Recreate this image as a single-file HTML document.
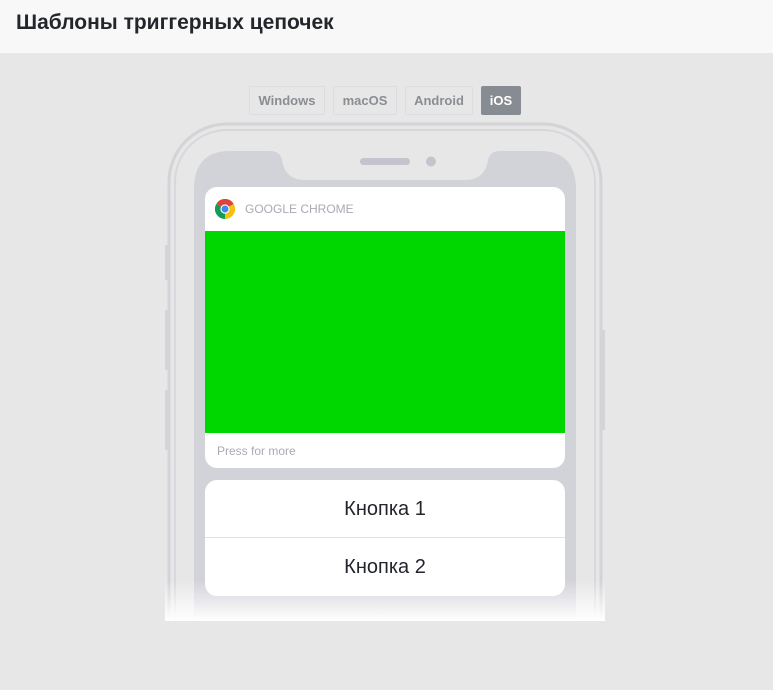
<!DOCTYPE html>
<html><head><meta charset="utf-8"><style>
*{margin:0;padding:0;box-sizing:border-box}
body{width:773px;height:690px;background:#e7e7e7;font-family:"Liberation Sans",sans-serif;position:relative;overflow:hidden}
.hdr{position:absolute;left:0;top:0;width:773px;height:53px;background:#f8f8f8}
.hdr h1{position:absolute;left:16px;top:11px;font-size:21px;font-weight:bold;color:#23262b}
.tab{position:absolute;top:86px;height:29px;border:1px solid #dcdde0;border-radius:2px;font-size:13px;font-weight:bold;color:#8a8d92;line-height:27px;text-align:center}
.card{position:absolute;left:205px;width:360px;background:#fff;border-radius:12px;overflow:hidden}
</style></head><body>
<div class="hdr"><h1>Шаблоны триггерных цепочек</h1></div>
<div class="tab" style="left:249px;width:76px">Windows</div>
<div class="tab" style="left:333px;width:64px">macOS</div>
<div class="tab" style="left:405px;width:68px">Android</div>
<div class="tab" style="left:481px;width:40px;background:#878c93;border-color:#878c93;color:#fff">iOS</div>
<svg style="position:absolute;left:0;top:0" width="773" height="621">
<rect x="165" y="245" width="4" height="35" fill="#d3d3d8"/>
<rect x="165" y="310" width="4" height="60" fill="#d3d3d8"/>
<rect x="165" y="390" width="4" height="60" fill="#d3d3d8"/>
<rect x="601" y="330" width="4" height="100" fill="#d3d3d8"/>
<rect x="169" y="124" width="432" height="560" rx="58" fill="none" stroke="#d3d3d8" stroke-width="3"/>
<rect x="175" y="130" width="420" height="550" rx="52" fill="none" stroke="#d8d8dc" stroke-width="2"/>
<path d="M194 660 V190 Q194 151 230 151 H270 Q280 151 282 160 Q285 180 305 180 H465 Q485 180 488 160 Q490 151 500 151 H540 Q576 151 576 190 V660 Z" fill="#d2d2d9"/>
<rect x="360" y="158" width="50" height="7" rx="3.5" fill="#c4c4cc"/>
<circle cx="431" cy="161.5" r="5" fill="#c4c4cc"/>
</svg>
<div class="card" style="top:187px;height:281px">
<svg style="position:absolute;left:10px;top:12px" width="20" height="20" viewBox="0 0 20 20">
<path d="M10 10 L1.3 5 A10 10 0 0 1 18.7 5 Z" fill="#db4437"/>
<path d="M10 10 L18.7 5 A10 10 0 0 1 10 20 Z" fill="#f4c20d"/>
<path d="M10 10 L10 20 A10 10 0 0 1 1.3 5 Z" fill="#0f9d58"/>
<circle cx="10" cy="10" r="4.6" fill="#fff"/><circle cx="10" cy="10" r="3.5" fill="#4285f4"/></svg>
<div style="position:absolute;left:40px;top:15px;font-size:12px;color:#a8abb3">GOOGLE CHROME</div>
<div style="position:absolute;left:0;top:44px;width:360px;height:202px;background:#00d600"></div>
<div style="position:absolute;left:12px;top:257px;font-size:12px;color:#a9a9b8">Press for more</div>
</div>
<div class="card" style="top:480px;height:116px">
<div style="height:58px;line-height:58px;text-align:center;font-size:20px;color:#22252b;border-bottom:1px solid #e0e0e6">Кнопка 1</div>
<div style="height:58px;line-height:58px;text-align:center;font-size:20px;color:#22252b">Кнопка 2</div>
</div>
<div style="position:absolute;left:165px;top:580px;width:440px;height:41px;background:linear-gradient(rgba(255,255,255,0),#fff)"></div>
</body></html>
